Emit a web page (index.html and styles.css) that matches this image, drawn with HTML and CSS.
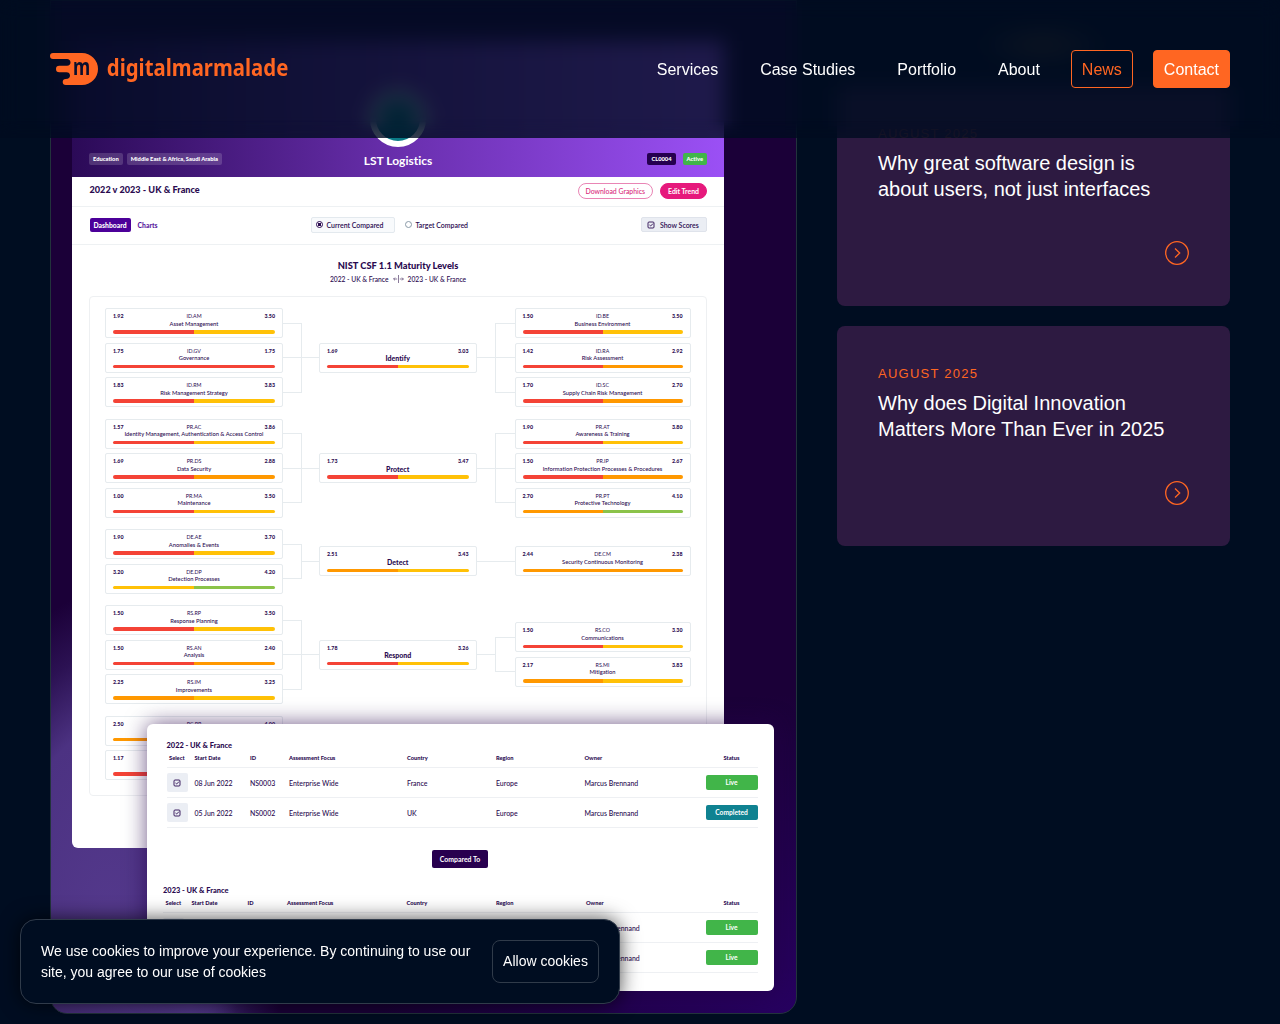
FILE: index.html
```html
<!DOCTYPE html>
<html lang="en">
<head>
<meta charset="utf-8">
<title>News | digitalmarmalade</title>
<link rel="stylesheet" href="styles.css">
</head>
<body>
<header class="site-header">
  <a class="logo">
    <svg width="240" height="36" viewBox="0 0 240 36">
      <path fill="#ff6622" d="M3 0H32A16 16 0 0 1 32 32H15.7A3 3 0 0 1 15.7 26C18.7 26 20 24.6 20 22.6C20 20.5 18.6 19.3 16.5 19.3H9.3A3.3 3.3 0 0 1 9.3 12.7H17C19.3 12.7 20.5 11.5 20.5 9.5C20.5 7.3 19 6 17 6H3A3 3 0 0 1 3 0Z"/>
      <text class="logo-m" x="23" y="22" textLength="17.2" lengthAdjust="spacingAndGlyphs">m</text>
      <text class="logo-word" x="56.8" y="22.8" textLength="181.5" lengthAdjust="spacingAndGlyphs">digitalmarmalade</text>
    </svg>
  </a>
  <nav class="nav">
    <a>Services</a><a>Case Studies</a><a>Portfolio</a><a>About</a><a class="current">News</a><a class="cta">Contact</a>
  </nav>
</header>

<main class="page">
  <section class="feature">
    <div class="board">
      <div class="hero">
        <div class="emblem"></div>
        <div class="hero-row">
          <div class="tags"><span class="tag">Education</span><span class="tag">Middle East &amp; Africa, Saudi Arabia</span></div>
          <h2>LST Logistics</h2>
          <div class="tags end"><span class="tag dark">CL0004</span><span class="tag green">Active</span></div>
        </div>
      </div>
      <div class="bar-title"><h3>2022 v 2023 - UK &amp; France</h3><div class="actions"><span class="pill">Download Graphics</span><span class="pill solid">Edit Trend</span></div></div>
      <div class="bar-tabs">
        <div class="tabs"><span class="tab on">Dashboard</span><span class="tab">Charts</span></div>
        <div class="radios"><span class="radio-box"><i class="radio on"></i>Current Compared</span><span class="radio-plain"><i class="radio"></i>Target Compared</span></div>
        <div class="side"><span class="show"><svg class="check" viewBox="0 0 8 8"><rect x="1" y="1" width="6" height="6" rx="1"/><path d="M2.5 4L3.6 5L6 2.6"/></svg>Show Scores</span></div>
      </div>
      <h4 class="chart-title">NIST CSF 1.1 Maturity Levels</h4>
      <p class="chart-sub"><span>2022 - UK &amp; France</span><svg width="11" height="8" viewBox="0 0 11 8"><path d="M5.5 0V8M4.2 4H.6M2 2.6L.6 4L2 5.4M6.8 4H10.4M9 2.6L10.4 4L9 5.4"/></svg><span>2023 - UK &amp; France</span></p>

      <div class="panel">
        <div class="group">
          <div class="stack">
            <div class="card"><b>1.92</b><i>ID.AM</i><b>3.50</b><p>Asset Management</p><u class="r y"></u></div>
            <div class="card"><b>1.75</b><i>ID.GV</i><b>1.75</b><p>Governance</p><u class="r r2"></u></div>
            <div class="card"><b>1.83</b><i>ID.RM</i><b>3.83</b><p>Risk Management Strategy</p><u class="r y"></u></div>
          </div>
          <div class="link"><div class="fork three"></div><div class="stem"></div></div>
          <div class="card mid"><b>1.69</b><i></i><b>3.03</b><p>Identify</p><u class="r y"></u></div>
          <div class="link"><div class="stem"></div><div class="fork left three"></div></div>
          <div class="stack">
            <div class="card"><b>1.50</b><i>ID.BE</i><b>3.50</b><p>Business Environment</p><u class="r y"></u></div>
            <div class="card"><b>1.42</b><i>ID.RA</i><b>2.92</b><p>Risk Assessment</p><u class="r o2"></u></div>
            <div class="card"><b>1.70</b><i>ID.SC</i><b>2.70</b><p>Supply Chain Risk Management</p><u class="r o2"></u></div>
          </div>
        </div>
        <div class="group">
          <div class="stack">
            <div class="card"><b>1.57</b><i>PR.AC</i><b>3.86</b><p>Identity Management, Authentication &amp; Access Control</p><u class="r y"></u></div>
            <div class="card"><b>1.69</b><i>PR.DS</i><b>2.88</b><p>Data Security</p><u class="r o2"></u></div>
            <div class="card"><b>1.00</b><i>PR.MA</i><b>3.50</b><p>Maintenance</p><u class="r y"></u></div>
          </div>
          <div class="link"><div class="fork three"></div><div class="stem"></div></div>
          <div class="card mid"><b>1.73</b><i></i><b>3.47</b><p>Protect</p><u class="r y"></u></div>
          <div class="link"><div class="stem"></div><div class="fork left three"></div></div>
          <div class="stack">
            <div class="card"><b>1.90</b><i>PR.AT</i><b>3.80</b><p>Awareness &amp; Training</p><u class="r y"></u></div>
            <div class="card"><b>1.50</b><i>PR.IP</i><b>2.67</b><p>Information Protection Processes &amp; Procedures</p><u class="r o2"></u></div>
            <div class="card"><b>2.70</b><i>PR.PT</i><b>4.10</b><p>Protective Technology</p><u class="o g"></u></div>
          </div>
        </div>
        <div class="group">
          <div class="stack">
            <div class="card"><b>1.90</b><i>DE.AE</i><b>3.70</b><p>Anomalies &amp; Events</p><u class="r y"></u></div>
            <div class="card"><b>3.20</b><i>DE.DP</i><b>4.20</b><p>Detection Processes</p><u class="ye g"></u></div>
          </div>
          <div class="link"><div class="fork"></div><div class="stem"></div></div>
          <div class="card mid"><b>2.51</b><i></i><b>3.43</b><p>Detect</p><u class="o y"></u></div>
          <div class="link"><div class="stem"></div><div class="stem"></div></div>
          <div class="stack">
            <div class="card"><b>2.44</b><i>DE.CM</i><b>2.38</b><p>Security Continuous Monitoring</p><u class="o o2"></u></div>
          </div>
        </div>
        <div class="group">
          <div class="stack">
            <div class="card"><b>1.50</b><i>RS.RP</i><b>3.50</b><p>Response Planning</p><u class="r y"></u></div>
            <div class="card"><b>1.50</b><i>RS.AN</i><b>2.40</b><p>Analysis</p><u class="r o2"></u></div>
            <div class="card"><b>2.25</b><i>RS.IM</i><b>3.25</b><p>Improvements</p><u class="o y"></u></div>
          </div>
          <div class="link"><div class="fork three"></div><div class="stem"></div></div>
          <div class="card mid"><b>1.78</b><i></i><b>3.26</b><p>Respond</p><u class="r y"></u></div>
          <div class="link"><div class="stem"></div><div class="fork left"></div></div>
          <div class="stack">
            <div class="card"><b>1.50</b><i>RS.CO</i><b>3.30</b><p>Communications</p><u class="r y"></u></div>
            <div class="card"><b>2.17</b><i>RS.MI</i><b>3.83</b><p>Mitigation</p><u class="o y"></u></div>
          </div>
        </div>
        <div class="group">
          <div class="stack">
            <div class="card"><b>2.50</b><i>RC.RP</i><b>4.00</b><p></p><u class="o g"></u></div>
            <div class="card"><b>1.17</b><i></i><b></b><p></p><u class="r y"></u></div>
          </div>
        </div>
      </div>
    </div>

    <div class="compare">
      <h5>2022 - UK &amp; France</h5>
      <div class="row head"><span class="sel">Select</span><span>Start Date</span><span>ID</span><span>Assessment Focus</span><span>Country</span><span>Region</span><span>Owner</span><span class="status">Status</span></div>
      <div class="row"><span class="tile"><svg class="check" viewBox="0 0 8 8"><rect x="1" y="1" width="6" height="6" rx="1"/><path d="M2.5 4L3.6 5L6 2.6"/></svg></span><span>08 Jun 2022</span><span>NS0003</span><span>Enterprise Wide</span><span>France</span><span>Europe</span><span>Marcus Brennand</span><span class="badge">Live</span></div>
      <div class="row"><span class="tile"><svg class="check" viewBox="0 0 8 8"><rect x="1" y="1" width="6" height="6" rx="1"/><path d="M2.5 4L3.6 5L6 2.6"/></svg></span><span>05 Jun 2022</span><span>NS0002</span><span>Enterprise Wide</span><span>UK</span><span>Europe</span><span>Marcus Brennand</span><span class="badge done">Completed</span></div>
      <div class="versus">Compared To</div>
      <div class="second">
        <h5>2023 - UK &amp; France</h5>
        <div class="row head"><span class="sel">Select</span><span>Start Date</span><span>ID</span><span>Assessment Focus</span><span>Country</span><span>Region</span><span>Owner</span><span class="status">Status</span></div>
        <div class="row"><span class="tile"></span><span></span><span></span><span></span><span></span><span></span><span>Marcus Brennand</span><span class="badge">Live</span></div>
        <div class="row"><span class="tile"></span><span></span><span></span><span></span><span></span><span></span><span>Marcus Brennand</span><span class="badge">Live</span></div>
      </div>
    </div>
  </section>

  <aside class="articles">
    <article class="article">
      <time class="behind">August 2025</time>
      <h3>Why great software design is about users, not just interfaces</h3>
      <svg class="go" viewBox="0 0 24 24"><circle cx="12" cy="12" r="11.3"/><path d="M10 7.5L14.7 12L10 16.5"/></svg>
    </article>
    <article class="article">
      <time>August 2025</time>
      <h3>Why does Digital Innovation Matters More Than Ever in 2025</h3>
      <svg class="go" viewBox="0 0 24 24"><circle cx="12" cy="12" r="11.3"/><path d="M10 7.5L14.7 12L10 16.5"/></svg>
    </article>
  </aside>
</main>

<div class="cookies">
  <p>We use cookies to improve your experience. By continuing to use our site, you agree to our use of cookies</p>
  <button>Allow cookies</button>
</div>
</body>
</html>
```

FILE: styles.css
```css
* { box-sizing: border-box; margin: 0; padding: 0; }
html, body { height: 1024px; overflow: hidden; }
body { background: #000d21; color: #fff; font-family: "Liberation Sans", Arial, sans-serif; font-size: 16px; }

/* header */
.site-header { position: fixed; top: 0; left: 0; right: 0; z-index: 10; height: 138px; padding: 0 50px; display: flex; align-items: center; justify-content: space-between; background: radial-gradient(ellipse 65px 22px at 1042px 45px, rgba(60, 50, 40, .22), transparent), rgba(0, 13, 33, .8); }
.site-header::before { content: ""; position: absolute; inset: 0; z-index: -1; backdrop-filter: blur(10px); -webkit-mask-image: linear-gradient(#000 88%, transparent); mask-image: linear-gradient(#000 88%, transparent); }
.logo { display: block; height: 32px; }
.logo svg { display: block; overflow: visible; }
.logo-m { font: 700 22.5px "Noto Sans", sans-serif; fill: #0a0f2e; }
.logo-word { font: 700 23px "Noto Sans", sans-serif; fill: #ff6622; }
.nav { display: flex; gap: 20px; }
.nav a { padding: 0 10px; height: 38px; line-height: 37px; border: 1px solid transparent; border-radius: 4px; }
.nav .current { border-color: #ff6622; color: #ff6622; }
.nav .cta { background: #ff6622; border-color: #ff6622; }

/* page */
.page { display: grid; grid-template-columns: 747px 393px; column-gap: 40px; padding: 0 50px; height: 1024px; }
.feature { position: relative; height: 1014px; padding: 39.5px 0 0 21px; border: 1px solid #22333c; border-radius: 0 0 17px 17px; overflow: hidden; font-family: Lato, sans-serif; font-variant-ligatures: none; color: #2a0a50;
  background: linear-gradient(90deg, #472d79, #54398c 75%, transparent) 0 100% / 185px 14px no-repeat, radial-gradient(ellipse 175px 340px at 60px 930px, #54398c 0, #4c3282 60%, rgba(60, 35, 110, .5) 82%, transparent 100%), radial-gradient(ellipse 420px 320px at 100% 100%, #270060, transparent), #1b0038; }
.board { width: 652px; height: 807px; background: #fff; border-radius: 0 0 6px 6px; }
.hero { height: 136px; padding: 50px 17px 0; background: linear-gradient(90deg, #2b0a57, #6b30b0 52%, #9b50f5); }
.emblem { width: 56px; height: 56px; margin: 0 auto; border: 6px solid #fff; border-radius: 50%; background: #0a7a86; }
.hero-row { display: grid; grid-template-columns: 1fr auto 1fr; align-items: center; height: 24px; padding-top: 1px; }
.hero h2 { font-size: 12px; font-weight: 700; color: #fff; padding-top: 2px; }
.tags { display: flex; gap: 4px; }
.tags.end { justify-content: flex-end; gap: 7px; }
.tag { height: 12px; line-height: 12px; padding: 0 4px; font-size: 5.75px; font-weight: 900; color: #fff; background: rgba(255, 255, 255, .16); border-radius: 2px; white-space: nowrap; }
.tag.dark { background: #25004f; }
.tag.green { background: #41b549; }
.bar-title { display: flex; justify-content: space-between; height: 30px; padding: 5px 17px 0 17.5px; border-bottom: 1px solid #eef1f3; }
.bar-title h3 { font-size: 9.15px; line-height: 16px; font-weight: 900; }
.actions { display: flex; gap: 7px; padding-top: 1px; }
.pill { height: 16px; line-height: 15px; padding: 0 7px; border: 1px solid #e985b5; border-radius: 8px; font-size: 6.9px; font-weight: 500; color: #d92b7c; }
.pill.solid { background: #e6197c; color: #fff; border-color: #e6197c; font-weight: 700; }
.bar-tabs { display: grid; grid-template-columns: 221px 1fr 66px; align-items: center; height: 38px; padding: 0 17px 1px 17.5px; border-bottom: 1px solid #eef1f3; font-size: 6.95px; font-weight: 600; }
.tabs { display: flex; gap: 7px; }
.tab { line-height: 14px; font-weight: 900; font-size: 6.8px; color: #5a1b9e; }
.tab.on { background: #4c0099; color: #fff; padding: 0 4px; border-radius: 2px; }
.radios { display: flex; gap: 10px; align-items: center; }
.radio-box, .radio-plain { display: flex; align-items: center; gap: 4px; height: 16px; white-space: nowrap; }
.radio-box { padding: 0 7px 0 4px; width: 84px; border: 1px solid #e3e9ee; border-radius: 2px; background: #f8fafc; }
.radio { width: 7px; height: 7px; border: 1px solid #8a9aa8; border-radius: 50%; }
.radio.on { border-color: #2a0a50; background: radial-gradient(#2a0a50 45%, #fff 55%); }
.show { display: flex; align-items: center; gap: 5px; height: 15px; padding-left: 5px; background: #ebeef4; border: 1px solid #dfe3eb; border-radius: 2px; }
.check { width: 8px; height: 8px; fill: none; stroke: #2a0a50; stroke-width: .9; }
.chart-title { padding-top: 14px; font-size: 9.3px; line-height: 13px; font-weight: 900; text-align: center; }
.chart-sub { display: flex; justify-content: center; gap: 4px; align-items: center; font-size: 6.7px; line-height: 15px; font-weight: 500; }
.chart-sub svg { fill: none; stroke: #57406f; stroke-width: .7; }

/* maturity diagram */
.panel { width: 618px; height: 500px; margin: 9px 0 0 17px; padding: 11.5px 15px 0; border: 1px solid #eef0f2; border-radius: 4px; display: flex; flex-direction: column; gap: 11.5px; }
.group { display: grid; grid-template-columns: 178px 36px 157.5px 38px 176px; align-items: center; }
.stack { display: flex; flex-direction: column; gap: 4.5px; }
.card { display: grid; grid-template-columns: 1fr auto 1fr; grid-template-rows: 6px 8px 3.4px; row-gap: .6px; height: 30px; padding: 4px 7px 0; border: 1px solid #e6ebee; border-radius: 2px; font-size: 5.3px; line-height: 6px; background: #fff; }
.card b { font-weight: 900; }
.card b:nth-of-type(2) { text-align: right; }
.card i { font-style: normal; }
.card p { grid-column: 1 / 4; text-align: center; font-size: 5.75px; line-height: 8px; font-weight: 500; white-space: nowrap; }
.mid p { font-size: 7px; font-weight: 900; }
.card u { grid-column: 1 / 4; border-radius: 2px; height: 3.4px; margin-top: 2.2px; text-decoration: none; background: linear-gradient(90deg, var(--a) 50%, var(--b) 50%); }
.r { --a: #f44336; }
.o { --a: #ff9800; }
.ye { --a: #ffc107; }
.y { --b: #ffc107; }
.r2 { --b: #f44336; }
.o2 { --b: #ff9800; }
.g { --b: #8bc34a; }
.link { display: flex; align-items: center; align-self: stretch; }
.stem { flex: 1; height: 1px; background: #e6ebee; }
.fork { flex: 1; height: calc(100% - 29px); border: 1px solid #e6ebee; border-left: 0; }
.fork.left { border-left: 1px solid #e6ebee; border-right: 0; }
.fork.three { background: linear-gradient(#e6ebee, #e6ebee) 0 50% / 100% 1px no-repeat; }
.group:nth-child(4) .fork.left { height: 35.5px; }

/* comparison window, floats over the board */
.compare { position: absolute; left: 96px; top: 723px; width: 627px; height: 267px; padding: 16px 16px 0 19.5px; border-radius: 6px; background: #fff; box-shadow: 0 0 22px rgba(35, 0, 70, .65); }
.compare h5 { font-size: 7.45px; line-height: 11px; font-weight: 900; }
.row { display: grid; grid-template-columns: 28px 55.5px 39px 118px 89px 88.5px 121px 52px; align-items: center; height: 30px; border-bottom: 1px solid #eef0f3; font-size: 6.95px; font-weight: 500; white-space: nowrap; }
.row.head { height: 17px; padding-bottom: 3px; font-size: 5.7px; font-weight: 900; }
.sel { padding-left: 2.5px; }
.status { text-align: center; }
.tile { display: flex; align-items: center; justify-content: center; width: 21px; height: 19px; background: #ebeef4; border-radius: 2px; }
.badge { height: 15px; line-height: 15px; text-align: center; border-radius: 2px; background: #41b549; color: #fff; font-weight: 700; font-size: 6.7px; }
.badge.done { background: #0f8291; }
.versus { width: 56px; height: 18px; line-height: 18px; margin: 22px 0 17px 265.5px; text-align: center; background: #28004f; border-radius: 2px; color: #fff; font-size: 6.9px; font-weight: 700; }
.second { margin-left: -3.5px; }
.second .row { grid-template-columns: 28.5px 56px 39.5px 119.5px 89.5px 90px 119.5px 52px; }

/* article list */
.articles { padding-top: 86px; display: flex; flex-direction: column; gap: 20px; }
.article { height: 220px; padding: 41px 41px 41px 41px; border-radius: 8px; background: #2d1a41; display: flex; flex-direction: column; }
.article time { font-size: 13px; line-height: 14px; letter-spacing: 1.25px; text-transform: uppercase; color: #ff6622; }
.article .behind { color: rgba(255, 102, 34, .35); }
.article h3 { margin-top: 9px; font-size: 20px; line-height: 26px; font-weight: 400; }
.go { width: 24px; height: 24px; margin: auto 0 0 auto; flex: none; fill: none; stroke: #ff6622; stroke-width: 1.3; }

/* cookie notice */
.cookies { position: fixed; left: 20px; bottom: 20px; z-index: 20; width: 600px; height: 85px; padding: 0 20px; display: flex; align-items: center; gap: 20px; border: 1px solid #303b4a; border-radius: 16px; background: #000d21; box-shadow: 0 0 20px rgba(0, 0, 0, .7); }
.cookies p { flex: 1; font-size: 14px; line-height: 21px; }
.cookies button { width: 107px; height: 43px; padding-bottom: 2px; border: 1px solid #303b4a; border-radius: 8px; background: none; color: #fff; font: 14px "Liberation Sans", Arial, sans-serif; }
```
